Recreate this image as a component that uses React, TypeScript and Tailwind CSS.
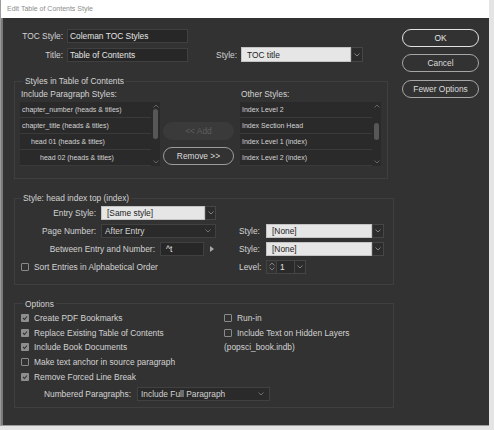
function Chev({ up = false, color = "#8a8a8a" }: { up?: boolean; color?: string }) {
  return (
    <svg width="6" height="4" viewBox="0 0 6 4" className="block shrink-0">
      <path d={up ? "M0.5 3.5 L3 1 L5.5 3.5" : "M0.5 0.5 L3 3 L5.5 0.5"} fill="none" stroke={color} strokeWidth="0.9" />
    </svg>
  );
}

function Check({ on = false }: { on?: boolean }) {
  if (on)
    return (
      <span className="flex h-[8px] w-[8px] shrink-0 items-center justify-center rounded-[1px] bg-[#8e8e8e]">
        <svg width="6" height="6" viewBox="0 0 6 6" className="block">
          <path d="M1 3 L2.5 4.5 L5 1.5" fill="none" stroke="#2f2f2f" strokeWidth="1.1" />
        </svg>
      </span>
    );
  return <span className="h-[8px] w-[8px] shrink-0 rounded-[1px] border border-[#8a8a8a]" />;
}

function ChevBox({ className }: { className: string }) {
  return (
    <div className={"flex items-center justify-center border border-[#464646] bg-[#2c2c2c] " + className}>
      <Chev />
    </div>
  );
}

type Row = { t: string; pad: string };

function StyleList({ rows, thumb }: { rows: Row[]; thumb: string }) {
  return (
    <div className="mt-[2px] flex h-[64px] bg-[#2a2a2a]">
      <div className="flex-1">
        {rows.map((r) => (
          <div key={r.t} className={"flex h-[16px] items-center border-b border-[#3a3a3a] text-[7px] text-[#d4d4d4] " + r.pad}>
            {r.t}
          </div>
        ))}
      </div>
      <div className="flex w-[9px] flex-col items-center py-[2px]">
        <Chev up color="#6a6a6a" />
        <div className={"w-[5px] rounded-full bg-[#575757] " + thumb} />
        <div className="mt-auto">
          <Chev color="#6a6a6a" />
        </div>
      </div>
    </div>
  );
}

export default function App() {
  return (
    <div
      className="h-[430px] w-[494px] bg-[#e4e4e4] text-[8.4px] leading-[12px] text-[#d2d2d2]"
      style={{ fontFamily: '"Liberation Sans", Arial, sans-serif' }}
    >
      <div className="flex h-[426px] w-[489px] flex-col border-l border-b border-[#9c9c9c] bg-[#7a7a7a]">
        {/* title bar */}
        <div className="flex h-[18px] items-center bg-white pl-[6px] text-[7px] text-[#8c8c8c]">
          Edit Table of Contents Style
        </div>

        <div className="ml-[2px] flex flex-1 bg-[#323232] pl-[11px] pt-[11px]">
          {/* left column */}
          <div className="w-[381px]">
            <div className="flex h-[14px] items-center">
              <span className="w-[49px] text-right">TOC Style:</span>
              <div className="ml-[4px] flex h-[14px] w-[121px] items-center border border-[#404040] bg-[#272727] pl-[2px] text-[#e4e4e4]">
                Coleman TOC Styles
              </div>
            </div>
            <div className="mt-[4px] flex h-[15px] items-center">
              <span className="w-[49px] text-right">Title:</span>
              <div className="ml-[4px] flex h-[14px] w-[121px] items-center border border-[#404040] bg-[#272727] pl-[2px] text-[#e4e4e4]">
                Table of Contents
              </div>
              <span className="w-[49px] text-right">Style:</span>
              <div className="ml-[4px] flex h-[15px]">
                <div className="flex w-[110px] items-center border border-[#c4c4c4] bg-[#e6e6e6] pl-[5px] text-[#1c1c1c]">
                  TOC title
                </div>
                <ChevBox className="w-[12px]" />
              </div>
            </div>

            {/* Styles in Table of Contents */}
            <fieldset className="mt-[13px] w-[374px] border border-[#3f3f3f] pb-[12px]">
              <legend className="ml-[8px] px-[2px] leading-[12px]">Styles in Table of Contents</legend>
              <div className="flex pl-[5px]">
                <div className="w-[140px]">
                  <div className="mt-[1px] pl-[1px]">Include Paragraph Styles:</div>
                  <StyleList
                    thumb="mt-[1px] h-[30px]"
                    rows={[
                      { t: "chapter_number (heads & titles)", pad: "pl-[2px]" },
                      { t: "chapter_title (heads & titles)", pad: "pl-[2px]" },
                      { t: "head 01 (heads & titles)", pad: "pl-[11px]" },
                      { t: "head 02 (heads & titles)", pad: "pl-[20px]" },
                    ]}
                  />
                </div>
                <div className="ml-[3px] w-[71px] pt-[35px]">
                  <div className="flex h-[18px] items-center justify-center rounded-full bg-[#3a3a3a] text-[#5e5e5e]">
                    &lt;&lt; Add
                  </div>
                  <div className="mt-[7px] flex h-[18px] items-center justify-center rounded-full border border-[#9c9c9c] text-[#dcdcdc]">
                    Remove &gt;&gt;
                  </div>
                </div>
                <div className="ml-[6px] w-[141px]">
                  <div className="mt-[1px] pl-[1px]">Other Styles:</div>
                  <StyleList
                    thumb="mt-[15px] h-[17px]"
                    rows={[
                      { t: "Index Level 2", pad: "pl-[2px]" },
                      { t: "Index Section Head", pad: "pl-[2px]" },
                      { t: "Index Level 1 (index)", pad: "pl-[2px]" },
                      { t: "Index Level 2 (index)", pad: "pl-[2px]" },
                    ]}
                  />
                </div>
              </div>
            </fieldset>

            {/* Style: head index top */}
            <fieldset className="mt-[13px] w-[380px] border border-[#3f3f3f] pb-[10px]">
              <legend className="ml-[6px] px-[2px] leading-[12px]">Style: head index top (index)</legend>
              <div className="pt-[1.5px]">
                <div className="flex h-[14px] items-center">
                  <div className="flex w-[224px] items-center">
                    <span className="w-[81px] text-right">Entry Style:</span>
                    <div className="ml-[5px] flex h-[14px]">
                      <div className="flex w-[104px] items-center border border-[#c4c4c4] bg-[#e6e6e6] pl-[5px] text-[#1c1c1c]">
                        [Same style]
                      </div>
                      <ChevBox className="w-[11px]" />
                    </div>
                  </div>
                </div>
                <div className="mt-[4px] flex h-[14px] items-center">
                  <div className="flex w-[224px] items-center">
                    <span className="w-[81px] text-right">Page Number:</span>
                    <div className="ml-[5px] flex h-[14px] w-[115px] items-center justify-between border border-[#414141] bg-[#2a2a2a] pl-[3px] pr-[4px]">
                      <span>After Entry</span>
                      <Chev color="#777" />
                    </div>
                  </div>
                  <span className="w-[27px]">Style:</span>
                  <div className="flex h-[14px]">
                    <div className="flex w-[106px] items-center border border-[#c4c4c4] bg-[#e6e6e6] pl-[5px] text-[#1c1c1c]">
                      [None]
                    </div>
                    <ChevBox className="w-[12px]" />
                  </div>
                </div>
                <div className="mt-[4px] flex h-[14px] items-center">
                  <div className="flex w-[224px] items-center">
                    <span className="w-[140px] text-right">Between Entry and Number:</span>
                    <div className="ml-[5px] flex h-[14px] w-[44px] items-center border border-[#404040] bg-[#272727] pl-[5px] text-[#e4e4e4]">
                      ^t
                    </div>
                    <svg width="4" height="6" viewBox="0 0 4 6" className="ml-[6px] block">
                      <path d="M0 0 L4 3 L0 6 Z" fill="#a8a8a8" />
                    </svg>
                  </div>
                  <span className="w-[27px]">Style:</span>
                  <div className="flex h-[14px]">
                    <div className="flex w-[106px] items-center border border-[#c4c4c4] bg-[#e6e6e6] pl-[5px] text-[#1c1c1c]">
                      [None]
                    </div>
                    <ChevBox className="w-[12px]" />
                  </div>
                </div>
                <div className="mt-[4.5px] flex h-[13.5px] items-center">
                  <div className="flex w-[224px] items-center pl-[6px]">
                    <Check />
                    <span className="ml-[5px]">Sort Entries in Alphabetical Order</span>
                  </div>
                  <span className="w-[27px]">Level:</span>
                  <div className="flex h-[13.5px]">
                    <div className="flex w-[11px] flex-col items-center justify-center gap-[1px] border border-[#444]">
                      <Chev up color="#888" />
                      <Chev color="#888" />
                    </div>
                    <div className="flex w-[17px] items-center border-y border-[#444] bg-[#2a2a2a] pl-[3px] text-[#e4e4e4]">1</div>
                    <ChevBox className="w-[12px]" />
                  </div>
                </div>
              </div>
            </fieldset>

            {/* Options */}
            <fieldset className="mt-[13px] w-[380px] border border-[#3f3f3f] pb-[6px]">
              <legend className="ml-[8px] px-[2px] leading-[12px]">Options</legend>
              <div className="flex pt-[1px]">
                <div className="w-[209px] pl-[6px]">
                  {[
                    ["Create PDF Bookmarks", true],
                    ["Replace Existing Table of Contents", true],
                    ["Include Book Documents", true],
                    ["Make text anchor in source paragraph", false],
                    ["Remove Forced Line Break", true],
                  ].map(([t, on]) => (
                    <div key={t as string} className="flex h-[14.8px] items-center">
                      <Check on={on as boolean} />
                      <span className="ml-[5px]">{t as string}</span>
                    </div>
                  ))}
                </div>
                <div>
                  <div className="flex h-[14.8px] items-center">
                    <Check />
                    <span className="ml-[5px]">Run-in</span>
                  </div>
                  <div className="flex h-[14.8px] items-center">
                    <Check />
                    <span className="ml-[5px]">Include Text on Hidden Layers</span>
                  </div>
                  <div className="flex h-[14.8px] items-center">(popsci_book.indb)</div>
                </div>
              </div>
              <div className="mt-[3px] flex h-[14px] items-center">
                <span className="w-[116px] text-right">Numbered Paragraphs:</span>
                <div className="ml-[6px] flex h-[14px] w-[133px] items-center justify-between border border-[#414141] bg-[#2a2a2a] pl-[3px] pr-[5px]">
                  <span>Include Full Paragraph</span>
                  <Chev color="#777" />
                </div>
              </div>
            </fieldset>
          </div>

          {/* right buttons */}
          <div className="ml-[7px] flex w-[77px] flex-col">
            <div className="flex h-[18px] items-center justify-center rounded-full border-[1.5px] border-[#e2e2e2] text-[#e6e6e6]">
              OK
            </div>
            <div className="mt-[7px] flex h-[18px] items-center justify-center rounded-full border border-[#a6a6a6] text-[#dcdcdc]">
              Cancel
            </div>
            <div className="mt-[8px] flex h-[18px] items-center justify-center rounded-full border border-[#a6a6a6] text-[#dcdcdc]">
              Fewer Options
            </div>
          </div>
        </div>
      </div>
    </div>
  );
}
